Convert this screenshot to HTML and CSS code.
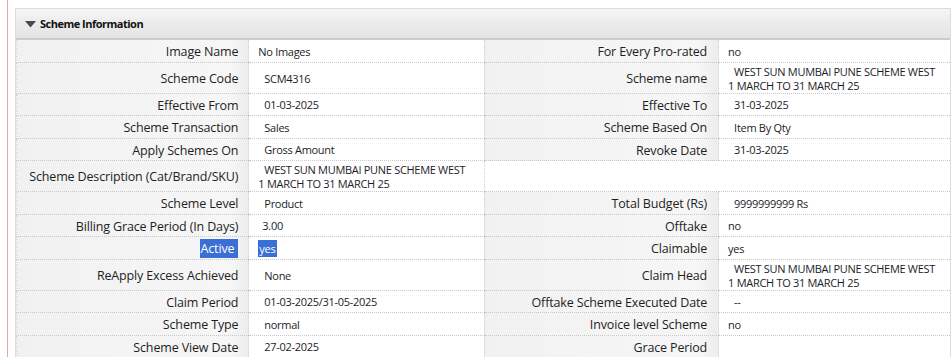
FILE: index.html
```html
<!DOCTYPE html>
<html lang="en">
<head>
<meta charset="utf-8">
<title>Scheme Information</title>
<link rel="stylesheet" href="styles.css">
</head>
<body>
<div class="frame">
  <section class="panel">
    <header class="panel-head">
      <svg class="caret" width="11" height="7" viewBox="0 0 11 7"><polygon points="0,0 11,0 5.5,6.5" fill="#4a4a4a"/></svg>
      <span class="panel-title">Scheme Information</span>
    </header>
    <table class="info">
      <colgroup>
        <col class="c1"><col class="c2"><col class="c3"><col class="c4">
      </colgroup>
      <tr>
        <th>Image Name</th><td>No Images</td>
        <th>For Every Pro-rated</th><td>no</td>
      </tr>
      <tr>
        <th>Scheme Code</th><td><span class="ind">SCM4316</span></td>
        <th>Scheme name</th><td><span class="ind">WEST SUN MUMBAI PUNE SCHEME WEST</span><br>1 MARCH TO 31 MARCH 25</td>
      </tr>
      <tr>
        <th>Effective From</th><td><span class="ind">01-03-2025</span></td>
        <th>Effective To</th><td><span class="ind">31-03-2025</span></td>
      </tr>
      <tr>
        <th>Scheme Transaction</th><td><span class="ind">Sales</span></td>
        <th>Scheme Based On</th><td><span class="ind">Item By Qty</span></td>
      </tr>
      <tr>
        <th>Apply Schemes On</th><td><span class="ind">Gross Amount</span></td>
        <th>Revoke Date</th><td><span class="ind">31-03-2025</span></td>
      </tr>
      <tr>
        <th>Scheme Description (Cat/Brand/SKU)</th><td><span class="ind">WEST SUN MUMBAI PUNE SCHEME WEST</span><br>1 MARCH TO 31 MARCH 25</td>
        <td class="blank" colspan="2"></td>
      </tr>
      <tr>
        <th>Scheme Level</th><td><span class="ind">Product</span></td>
        <th>Total Budget (Rs)</th><td><span class="ind">9999999999 Rs</span></td>
      </tr>
      <tr>
        <th>Billing Grace Period (In Days)</th><td><span class="ind2">3.00</span></td>
        <th>Offtake</th><td>no</td>
      </tr>
      <tr>
        <th><span class="sel">Active</span></th><td><span class="sel">yes</span></td>
        <th>Claimable</th><td>yes</td>
      </tr>
      <tr>
        <th>ReApply Excess Achieved</th><td><span class="ind">None</span></td>
        <th>Claim Head</th><td><span class="ind">WEST SUN MUMBAI PUNE SCHEME WEST</span><br>1 MARCH TO 31 MARCH 25</td>
      </tr>
      <tr>
        <th>Claim Period</th><td><span class="ind">01-03-2025/31-05-2025</span></td>
        <th>Offtake Scheme Executed Date</th><td><span class="ind">--</span></td>
      </tr>
      <tr>
        <th>Scheme Type</th><td><span class="ind">normal</span></td>
        <th>Invoice level Scheme</th><td>no</td>
      </tr>
      <tr>
        <th>Scheme View Date</th><td><span class="ind">27-02-2025</span></td>
        <th>Grace Period</th><td></td>
      </tr>
    </table>
  </section>
</div>
</body>
</html>
```
FILE: styles.css
```css
html, body {
  margin: 0;
  padding: 0;
  background: #fff;
}
body {
  font-family: "Open Sans", "Noto Sans", sans-serif;
  color: #222;
  height: 357px;
  overflow: hidden;
}
.frame {
  margin-left: 7px;
  border-left: 1px solid #eba3a3;
  padding: 8px 0 0 7px;
  min-height: 400px;
  box-sizing: border-box;
}
.panel {
  width: 934px;
  border-left: 1px solid #dcdcdc;
  border-right: 1px solid #dcdcdc;
}
.panel-head {
  height: 29px;
  border-top: 1px solid #dcdcdc;
  border-bottom: 2px solid #cbcbcb;
  background: linear-gradient(to bottom, #f6f6f6 0%, #ececec 45%, #e4e4e4 100%);
  display: flex;
  align-items: center;
  padding-left: 9px;
  gap: 4px;
}
.caret {
  margin-top: 1px;
}
.panel-title {
  font-size: 11px;
  font-weight: 700;
  color: #111;
  letter-spacing: -0.5px;
}
.info {
  width: 100%;
  border-collapse: collapse;
  table-layout: fixed;
}
.c1 { width: 232px; }
.c2 { width: 235px; }
.c3 { width: 234px; }
.c4 { width: 231px; }
.info th,
.info td {
  border-bottom: 1px dotted #c8c8c8;
  border-left: 1px dotted #d0d0d0;
  padding: 2px 10px 0 9px;
  vertical-align: middle;
  white-space: nowrap;
}
.info th {
  font-weight: 400;
  text-align: right;
  font-size: 12.5px;
  letter-spacing: -0.15px;
  line-height: 19.5px;
  color: #1e1e1e;
  background: linear-gradient(to right, #f1f1f1 0%, #f6f6f6 92%, #ececec 100%);
}
.info th + td + th {
  padding-right: 11px;
}
.info td {
  font-size: 11px;
  letter-spacing: -0.3px;
  line-height: 14px;
  color: #1c1c28;
  background: #fff;
}
.info td.blank {
  background: #fff;
}
.ind {
  padding-left: 6px;
}
.ind2 {
  padding-left: 4px;
}
.sel {
  background: #3a6fd6;
  color: #fff;
  padding: 1px 4px 1px 0;
}
.info td .sel {
  padding: 1px 2px 1px 1px;
}
```
